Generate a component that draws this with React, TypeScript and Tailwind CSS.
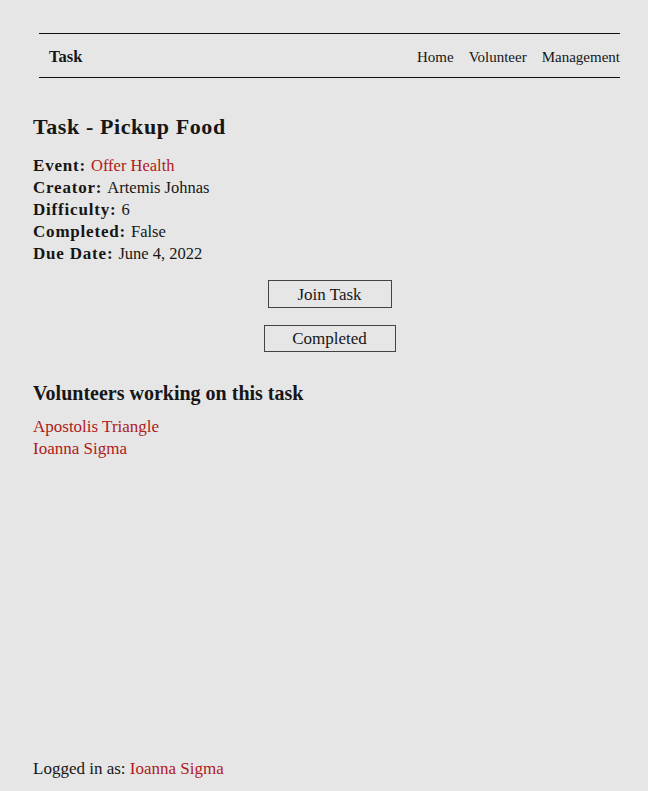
import { FC } from "react";

const serif = { fontFamily: '"Liberation Serif", "Times New Roman", serif' };

const Row: FC<{ label: string; children: React.ReactNode }> = ({ label, children }) => (
  <div className="h-[22px] leading-[22px] flex items-baseline">
    <span className="font-bold text-[17px] tracking-[0.8px] mr-[5px]">{label}</span>
    <span className="text-[16.5px]">{children}</span>
  </div>
);

export default function App() {
  return (
    <div className="min-h-screen flex flex-col bg-[#e6e6e6] text-[#161616]" style={serif}>
      {/* Nav */}
      <nav className="mt-[33px] ml-[39px] mr-[28px] h-[45px] border-y border-[#111] flex items-center justify-between pl-[10px] pt-[3px]">
        <span className="font-bold text-[16.5px]">Task</span>
        <div className="flex gap-[15px] text-[15px]">
          <span>Home</span>
          <span>Volunteer</span>
          <span>Management</span>
        </div>
      </nav>

      <main className="flex-1 px-[33px]">
        <h1 className="mt-[35px] h-[28px] leading-[28px] font-bold text-[22px] tracking-[0.6px]">
          Task - Pickup Food
        </h1>

        <div className="mt-[14px]">
          <Row label="Event:">
            <span className="text-[#b01a1a]">Offer Health</span>
          </Row>
          <Row label="Creator:">Artemis Johnas</Row>
          <Row label="Difficulty:">6</Row>
          <Row label="Completed:">False</Row>
          <Row label="Due Date:">June 4, 2022</Row>
        </div>

        <div className="mt-[15px] flex flex-col items-center gap-[17px] pl-[11px]">
          <button className="h-[28px] w-[124px] border border-[#444] text-[17px] leading-none" style={serif}>
            Join Task
          </button>
          <button className="h-[27px] w-[132px] border border-[#444] text-[17px] leading-none" style={serif}>
            Completed
          </button>
        </div>

        <h2 className="mt-[28px] h-[26px] leading-[26px] font-bold text-[20px]">
          Volunteers working on this task
        </h2>
        <div className="mt-[10px] text-[17px] leading-[22px] text-[#b01a1a]">
          <div>Apostolis Triangle</div>
          <div>Ioanna Sigma</div>
        </div>
      </main>

      <footer className="px-[33px] pb-[11px] text-[17px] leading-[22px]">
        Logged in as: <span className="text-[#b01a1a]">Ioanna Sigma</span>
      </footer>
    </div>
  );
}
